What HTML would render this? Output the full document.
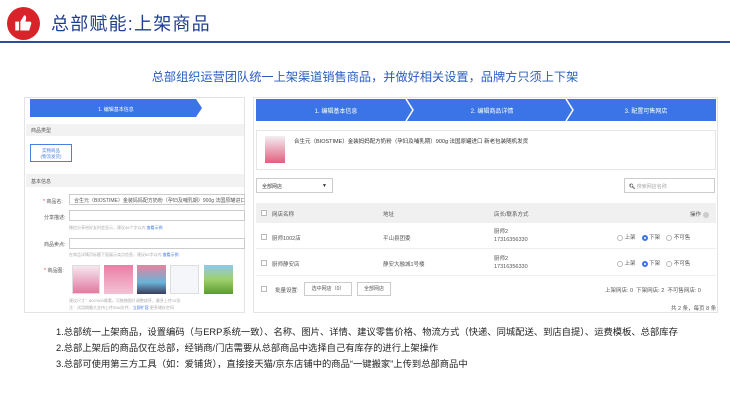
<!DOCTYPE html>
<html><head><meta charset="utf-8"><style>
*{margin:0;padding:0;box-sizing:border-box}
body{width:730px;height:411px;background:#fff;font-family:"Liberation Sans","Noto Sans CJK SC",sans-serif;position:relative;overflow:hidden;color:#333}
.a{position:absolute}
.t{font-size:5px;color:#555;white-space:nowrap}
</style></head><body>
<div class="a" style="left:7px;top:7px;width:33px;height:33px;border-radius:50%;background:#d9232a"></div>
<svg class="a" style="left:14px;top:14px" width="19" height="19" viewBox="0 0 15 15"><rect x="1" y="6" width="3" height="7" fill="#fff"/><path d="M5 6 L8 1 Q10 1 9.5 4 L9 6 L13 6 Q14 7 13.5 8 L12 13 L5 13 Z" fill="#fff"/></svg>
<div class="a" style="left:51px;top:10px;font-size:18px;color:#1f3f8f;letter-spacing:1.2px">总部赋能:上架商品</div>
<div class="a" style="left:0;top:41px;width:730px;height:2px;background:#2b4f9c"></div>
<div class="a" style="left:0;top:67px;width:730px;text-align:center;font-size:12.2px;color:#2b5bbf">总部组织运营团队统一上架渠道销售商品，并做好相关设置，品牌方只须上下架</div>

<!-- left panel -->
<div class="a" style="left:24px;top:97px;width:221px;height:216px;border:1px solid #e3e3e3"></div>
<svg class="a" style="left:30px;top:99px" width="172" height="18"><path d="M0 0H166L172 9L166 18H0Z" fill="#3a74e6"/><text x="86" y="12" font-size="5" fill="#fff" text-anchor="middle" font-family="Liberation Sans,Noto Sans CJK SC,sans-serif">1. 编辑基本信息</text></svg>
<div class="a" style="left:26px;top:124px;width:218px;height:12px;background:#f2f2f2"></div>
<div class="a t" style="left:31px;top:127px">商品类型</div>
<div class="a" style="left:30px;top:144px;width:42px;height:18px;border:1px solid #4a7fe0;font-size:4.5px;color:#4a7fe0;text-align:center;line-height:6px;padding-top:3px">实物商品<br>(物流发货)</div>
<div class="a" style="left:26px;top:174px;width:218px;height:13px;background:#f2f2f2"></div>
<div class="a t" style="left:31px;top:178px">基本信息</div>
<div class="a t" style="left:43px;top:198px"><span style="color:#e33">*</span> 商品名:</div>
<div class="a t" style="left:69px;top:194px;width:176px;height:11px;border:1px solid #ccc;padding:2px 4px;overflow:hidden">合生元（BIOSTIME）金装妈妈配方奶粉（孕妇及哺乳期）900g 法国原罐进口 新老</div>
<div class="a t" style="left:44px;top:214px">分享描述:</div>
<div class="a" style="left:69px;top:210px;width:176px;height:11px;border:1px solid #ccc"></div>
<div class="a t" style="left:69px;top:225px;font-size:4px;color:#aaa">微信分享给好友时会显示，建议36个字以内 <span style="color:#3a74e6">查看示例</span></div>
<div class="a t" style="left:44px;top:241px">商品卖点:</div>
<div class="a" style="left:69px;top:238px;width:176px;height:11px;border:1px solid #ccc"></div>
<div class="a t" style="left:69px;top:252px;font-size:4px;color:#aaa">在商品详情页标题下面展示卖点信息，建议60字以内 <span style="color:#3a74e6">查看示例</span></div>
<div class="a t" style="left:44px;top:267px"><span style="color:#e33">*</span> 商品图:</div>
<div class="a" style="left:72px;top:265px;width:28px;height:29px;background:linear-gradient(#f5e7ee,#e27aa0);border:1px solid #ddd"></div>
<div class="a" style="left:104px;top:265px;width:29px;height:29px;background:linear-gradient(#e97fa5,#f3c2d4)"></div>
<div class="a" style="left:137px;top:265px;width:29px;height:29px;background:linear-gradient(#e4849e,#6ab3d8 60%,#3b3b5a)"></div>
<div class="a" style="left:170px;top:265px;width:29px;height:29px;background:#f4f6fa;border:1px solid #ddd"></div>
<div class="a" style="left:204px;top:265px;width:29px;height:29px;background:linear-gradient(#8fc8ee,#9fd06a 50%,#5a9a35)"></div>
<div class="a t" style="left:69px;top:298px;font-size:4px;color:#aaa">建议尺寸：800*800像素，可拖拽图片调整顺序，最多上传15张</div>
<div class="a t" style="left:69px;top:305px;font-size:4px;color:#aaa">注：试用期最大支持上传30M文件，<span style="color:#3a74e6">立即扩容</span> 更多储存空间</div>

<!-- right panel -->
<div class="a" style="left:253px;top:97px;width:465px;height:216px;border:1px solid #e3e3e3"></div>
<svg class="a" style="left:256px;top:99px" width="460" height="22"><rect width="460" height="22" fill="#3a74e6"/><path d="M150 0L157 11L150 22M310 0L317 11L310 22" stroke="#fff" stroke-width="1.5" fill="none"/><g font-size="6" fill="#fff" text-anchor="middle" font-family="Liberation Sans,Noto Sans CJK SC,sans-serif"><text x="80" y="14">1. 编辑基本信息</text><text x="236" y="14">2. 编辑商品详情</text><text x="390" y="14">3. 配置可售网店</text></g></svg>
<div class="a" style="left:256px;top:130px;width:460px;height:40px;border:1px solid #e6e6e6"></div>
<div class="a" style="left:265px;top:136px;width:20px;height:27px;background:linear-gradient(#f4eef2,#e0607f)"></div>
<div class="a t" style="left:294px;top:137px;font-size:5.5px;color:#333">合生元（BIOSTIME）金装妈妈配方奶粉（孕妇及哺乳期）900g 法国原罐进口 新老包装随机发货</div>
<div class="a t" style="left:256px;top:178px;width:77px;height:15px;border:1px solid #ccc;padding:4px 5px;font-size:5px;color:#333">全部网店<span style="float:right;font-size:5px">▼</span></div>
<div class="a t" style="left:624px;top:178px;width:91px;height:15px;border:1px solid #ccc;padding:4px 4px;font-size:5px;color:#aaa"><b style="color:#333">&#x1F50D;&#xFE0E;</b> 搜索网店名称</div>
<div class="a" style="left:256px;top:203px;width:460px;height:20px;background:#f0f0f0"></div>
<div class="a" style="left:256px;top:248px;width:460px;height:1px;background:#eee"></div>
<div class="a" style="left:256px;top:275px;width:460px;height:1px;background:#eee"></div>
<div class="a" style="left:261px;top:210px;width:6px;height:6px;border:1px solid #bbb;background:#fff"></div>
<div class="a t" style="left:272px;top:210px;font-size:5.5px">网店名称</div>
<div class="a t" style="left:383px;top:210px;font-size:5.5px">地址</div>
<div class="a t" style="left:494px;top:210px;font-size:5.5px">店长/联系方式</div>
<div class="a t" style="left:690px;top:210px;font-size:5.5px">操作 <span style="display:inline-block;width:6px;height:6px;border-radius:50%;background:#ccc;vertical-align:middle"></span></div>
<div class="a" style="left:261px;top:234px;width:6px;height:6px;border:1px solid #bbb"></div>
<div class="a t" style="left:272px;top:234px;font-size:5.5px">厨师1002店</div>
<div class="a t" style="left:383px;top:234px;font-size:5.5px">平山县团委</div>
<div class="a t" style="left:494px;top:228px;font-size:5.5px;line-height:8px">厨师2<br>17316356330</div>
<div class="a" style="left:261px;top:260px;width:6px;height:6px;border:1px solid #bbb"></div>
<div class="a t" style="left:272px;top:260px;font-size:5.5px">厨师静安店</div>
<div class="a t" style="left:383px;top:260px;font-size:5.5px">静安大融城1号楼</div>
<div class="a t" style="left:494px;top:255px;font-size:5.5px;line-height:8px">厨师2<br>17316356330</div>
<div class="a t" style="left:617px;top:233px;font-size:5.5px"><span style="display:inline-block;width:6px;height:6px;border-radius:50%;border:1px solid #bbb;vertical-align:middle"></span> 上架 &nbsp; &nbsp;<span style="display:inline-block;width:6px;height:6px;border-radius:50%;border:2px solid #3a74e6;vertical-align:middle"></span> 下架 &nbsp; &nbsp;<span style="display:inline-block;width:6px;height:6px;border-radius:50%;border:1px solid #bbb;vertical-align:middle"></span> 不可售</div>
<div class="a t" style="left:617px;top:259px;font-size:5.5px"><span style="display:inline-block;width:6px;height:6px;border-radius:50%;border:1px solid #bbb;vertical-align:middle"></span> 上架 &nbsp; &nbsp;<span style="display:inline-block;width:6px;height:6px;border-radius:50%;border:2px solid #3a74e6;vertical-align:middle"></span> 下架 &nbsp; &nbsp;<span style="display:inline-block;width:6px;height:6px;border-radius:50%;border:1px solid #bbb;vertical-align:middle"></span> 不可售</div>
<div class="a" style="left:261px;top:286px;width:6px;height:6px;border:1px solid #bbb"></div>
<div class="a t" style="left:275px;top:286px;font-size:5.5px">批量设置:</div>
<div class="a t" style="left:304px;top:282px;width:48px;height:14px;border:1px solid #ccc;font-size:5px;text-align:center;line-height:12px">选中网店（0）</div>
<div class="a t" style="left:357px;top:282px;width:34px;height:14px;border:1px solid #ccc;font-size:5px;text-align:center;line-height:12px">全部网店</div>
<div class="a t" style="left:605px;top:286px;font-size:5.5px">上架网店: 0 &nbsp;下架网店: 2 &nbsp;不可售网店: 0</div>
<div class="a t" style="left:671px;top:304px;font-size:5.5px">共 2 条，每页 8 条</div>

<div class="a" style="left:56px;top:324px;font-size:9.3px;color:#222;line-height:16px;white-space:nowrap">1.总部统一上架商品，设置编码（与ERP系统一致）、名称、图片、详情、建议零售价格、物流方式（快递、同城配送、到店自提）、运费模板、总部库存<br>2.总部上架后的商品仅在总部，经销商/门店需要从总部商品中选择自己有库存的进行上架操作<br>3.总部可使用第三方工具（如：爱铺货），直接接天猫/京东店铺中的商品“一键搬家”上传到总部商品中</div>
</body></html>
